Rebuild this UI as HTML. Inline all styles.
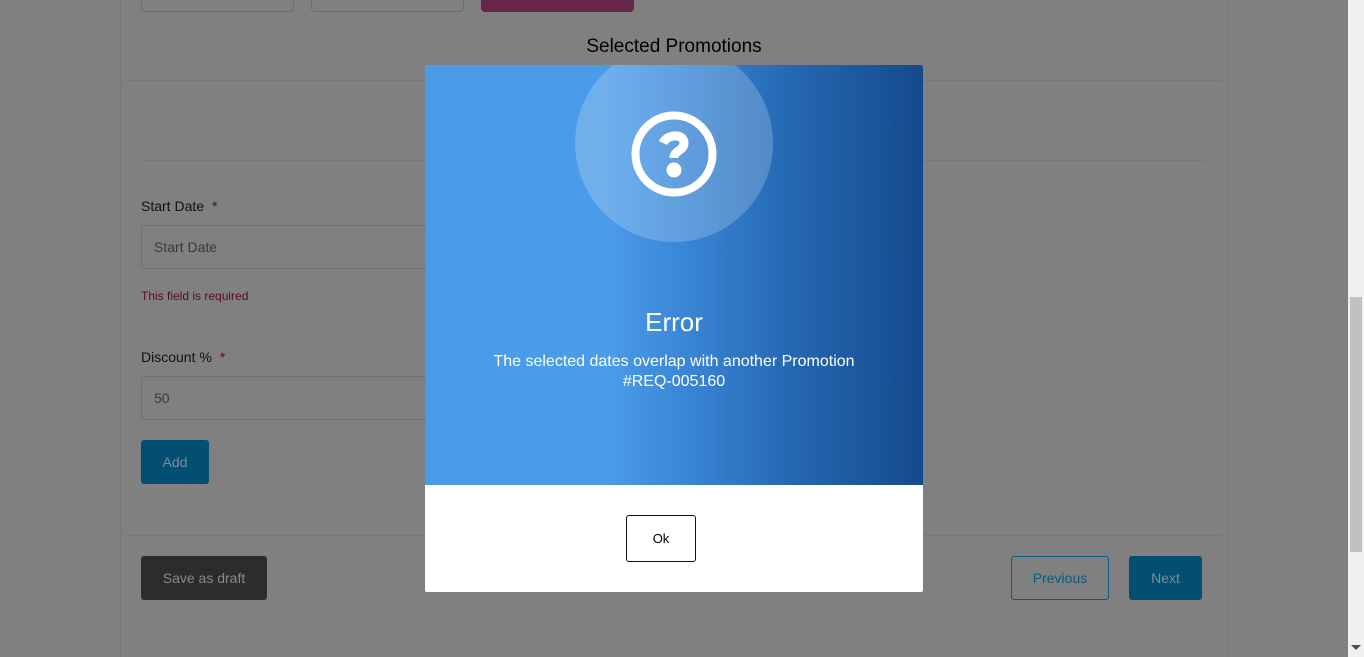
<!DOCTYPE html>
<html><head><meta charset="utf-8"><style>
*{box-sizing:border-box;margin:0;padding:0}
body{width:1364px;height:657px;overflow:hidden;background:#808080;font-family:"Liberation Sans",sans-serif;position:relative}
.a{position:absolute}
.vl{position:absolute;top:0;width:1px;height:657px;background:#787878}
.hl{position:absolute;height:1px;background:#777}
.lbl{font-size:14px;color:#111}
.star{color:#5a0a1a;margin-left:8px}
.inp{position:absolute;border:1px solid #6f6f6f;border-radius:3px;height:44px;font-size:14px;color:#3a3a3a;padding:12px 12px;line-height:18px}
.btn{position:absolute;border-radius:3px;font-size:14px;text-align:center}
</style></head><body>
<div class="vl" style="left:120px"></div>
<div class="vl" style="left:1227px"></div>
<div class="a" style="left:141px;top:-4px;width:153px;height:16px;border:1px solid #6c6c6c;border-radius:4px"></div>
<div class="a" style="left:311px;top:-4px;width:153px;height:16px;border:1px solid #6c6c6c;border-radius:4px"></div>
<div class="a" style="left:481px;top:-4px;width:153px;height:16px;background:#65264a;border-radius:4px"></div>
<div class="a" style="left:0;width:1348px;top:36px;text-align:center;font-size:19px;color:#000">Selected Promotions</div>
<div class="hl" style="left:126px;width:1096px;top:80px"></div>
<div class="hl" style="left:141px;width:1064px;top:160px"></div>
<div class="a lbl" style="left:141px;top:198px">Start Date<span class="star">*</span></div>
<div class="inp" style="left:141px;top:225px;width:300px">Start Date</div>
<div class="a" style="left:141px;top:289px;font-size:12px;color:#5a0a1a">This field is required</div>
<div class="a lbl" style="left:141px;top:349px">Discount %<span class="star">*</span></div>
<div class="inp" style="left:141px;top:376px;width:300px">50</div>
<div class="btn" style="left:141px;top:440px;width:68px;height:44px;background:#024f73;color:#7d8d96;line-height:44px">Add</div>
<div class="hl" style="left:126px;width:1096px;top:535px"></div>
<div class="btn" style="left:141px;top:556px;width:126px;height:44px;background:#2c2c2c;color:#8a8a8a;line-height:44px">Save as draft</div>
<div class="btn" style="left:1011px;top:556px;width:98px;height:44px;border:1px solid #0a5a80;color:#0a5a80;line-height:42px">Previous</div>
<div class="btn" style="left:1129px;top:556px;width:73px;height:44px;background:#024f73;color:#7d8d96;line-height:44px">Next</div>
<div class="a" style="left:1348px;top:0;width:16px;height:657px;background:#f0f0f0"></div>
<div class="a" style="left:1350px;top:297px;width:12px;height:255px;background:#c1c1c1"></div>
<div class="a" style="left:1351px;top:645px;width:0;height:0;border-left:5px solid transparent;border-right:5px solid transparent;border-top:5px solid #505050"></div>
<div class="a" style="left:425px;top:65px;width:498px;height:527px;background:#fff;border-radius:2px;overflow:hidden">
 <div class="a" style="left:0;top:0;width:498px;height:420px;background:linear-gradient(90deg,#4a9be8 0%,#4a9be8 37%,#3a86d6 52%,#2466b0 75%,#154a8c 100%)"></div>
 <div class="a" style="left:150px;top:-21px;width:198px;height:198px;border-radius:50%;background:rgba(255,255,255,0.2)"></div>
 <svg class="a" style="left:205px;top:45px" width="88" height="88" viewBox="0 0 88 88">
  <circle cx="44" cy="44" r="38.5" fill="none" stroke="#fff" stroke-width="8"/>
  <path d="M33 33 C37 24 54 23 54 33 C54 41 44 40 44 48" fill="none" stroke="#fff" stroke-width="9" stroke-linejoin="round"/>
  <circle cx="44" cy="60" r="7.5" fill="#fff"/>
 </svg>
 <div class="a" style="left:0;width:498px;top:242px;text-align:center;color:#fff;font-size:26px">Error</div>
 <div class="a" style="left:0;width:498px;top:287px;text-align:center;color:#fff;font-size:16px;line-height:20px">The selected dates overlap with another Promotion<br>#REQ-005160</div>
 <div class="btn" style="left:201px;top:450px;width:70px;height:47px;border:1px solid #111;color:#000;line-height:45px;font-size:13px;border-radius:3px">Ok</div>
</div>
</body></html>
